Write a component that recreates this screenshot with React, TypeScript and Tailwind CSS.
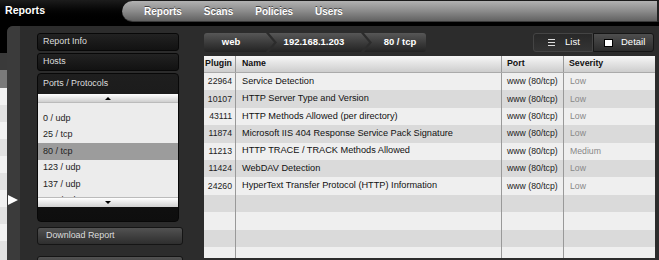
const ports = ["0 / tcp", "0 / udp", "25 / tcp", "80 / tcp", "123 / udp", "137 / udp", "138 / udp"];

const rows = [
  ["22964", "Service Detection", "www (80/tcp)", "Low"],
  ["10107", "HTTP Server Type and Version", "www (80/tcp)", "Low"],
  ["43111", "HTTP Methods Allowed (per directory)", "www (80/tcp)", "Low"],
  ["11874", "Microsoft IIS 404 Response Service Pack Signature", "www (80/tcp)", "Low"],
  ["11213", "HTTP TRACE / TRACK Methods Allowed", "www (80/tcp)", "Medium"],
  ["11424", "WebDAV Detection", "www (80/tcp)", "Low"],
  ["24260", "HyperText Transfer Protocol (HTTP) Information", "www (80/tcp)", "Low"],
  ["", "", "", ""],
  ["", "", "", ""],
  ["", "", "", ""],
  ["", "", "", ""],
];

function SideItem({ label }: { label: string }) {
  return (
    <div className="flex h-[18px] items-center rounded-[3px] border border-[#080808] bg-gradient-to-b from-[#222] to-[#121212] pl-[5px] text-[8.9px] text-[#ddd]">
      {label}
    </div>
  );
}

function GrayButton({ label }: { label: string }) {
  return (
    <div className="flex h-[18px] w-[146px] shrink-0 items-center rounded-[3px] border border-[#151515] bg-gradient-to-b from-[#525252] to-[#2e2e2e] pl-[8px] text-[8.9px] text-[#ddd]">
      {label}
    </div>
  );
}

export default function App() {
  return (
    <div className="flex h-[260px] w-[659px] flex-col overflow-hidden bg-black font-['Liberation_Sans',Arial,sans-serif]">
      {/* top bar */}
      <header className="flex h-[22px] shrink-0 bg-gradient-to-b from-[#1c1c1c] to-black">
        <div className="flex w-[122px] items-center pl-[5px] text-[10.6px] font-bold text-white">Reports</div>
        <nav className="mt-[1px] flex h-[21px] flex-1 items-center gap-[22px] rounded-l-[11px] border-b border-r-2 border-b-[#3a3a3a] border-r-[#222] bg-gradient-to-b from-[#b2b2b2] via-[#8c8c8c] to-[#626262] pl-[22px] text-[10px] font-bold text-white [text-shadow:0_-1px_0_#444]">
          <span>Reports</span>
          <span>Scans</span>
          <span>Policies</span>
          <span>Users</span>
        </nav>
      </header>

      <div className="mt-[4px] flex flex-1">
        {/* page behind the drawer */}
        <div className="flex w-[7px] shrink-0 flex-col">
          <div className="h-[27px] bg-black" />
          <div className="h-[17px] bg-[#3a3a3a]" />
          <div className="h-[18px] bg-[#7a7a7a]" />
          <div className="h-[17px] bg-[#f2f2f2]" />
          <div className="h-[17px] bg-[#e2e2e2]" />
          <div className="h-[17px] bg-[#f2f2f2]" />
          <div className="h-[17px] bg-[#e2e2e2]" />
          <div className="h-[17px] bg-[#f2f2f2]" />
          <div className="h-[17px] bg-[#e2e2e2]" />
          <div className="h-[17px] bg-[#f2f2f2]" />
          <div className="h-[17px] bg-[#e2e2e2]" />
          <div className="h-[17px] bg-[#f2f2f2]" />
          <div className="flex-1 bg-[#e2e2e2]" />
        </div>

        {/* drawer */}
        <div className="flex flex-1 overflow-hidden rounded-tl-[6px] bg-[#2c2c2c]">
          <div className="w-[13px] shrink-0 bg-[#3b3b3b] pl-[1px] pt-[169px]">
            <div className="h-0 w-0 border-y-[5.5px] border-l-[10px] border-y-transparent border-l-white" />
          </div>

          {/* sidebar */}
          <div className="ml-[17px] flex w-[146px] shrink-0 flex-col pt-[7px]">
            <div className="flex w-[142px] flex-col gap-[2px]">
              <SideItem label="Report Info" />
              <SideItem label="Hosts" />
              <div className="flex h-[149px] flex-col overflow-hidden rounded-[4px] border border-[#080808] bg-gradient-to-b from-[#1e1e1e] to-[#0e0e0e]">
                <div className="flex h-[20px] shrink-0 items-center pl-[5px] text-[8.9px] text-[#ddd]">Ports / Protocols</div>
                <div className="flex h-[9px] shrink-0 items-center justify-center border-b border-[#bbb] bg-gradient-to-b from-white to-[#cfcfcf]">
                  <div className="h-0 w-0 border-x-[3px] border-b-[3px] border-x-transparent border-b-black" />
                </div>
                <div className="h-[94px] shrink-0 overflow-hidden bg-[#ececec]">
                  <div className="-mt-[19px]">
                    {ports.map((p) => (
                      <div
                        key={p}
                        className={`flex items-center pl-[5px] text-[9px] text-[#222] ${p === "0 / tcp" ? "h-[26px]" : "h-[16.5px]"} ${p === "80 / tcp" ? "bg-[#9c9c9c]" : ""}`}
                      >
                        {p}
                      </div>
                    ))}
                  </div>
                </div>
                <div className="flex h-[10px] shrink-0 items-center justify-center border-t border-[#bbb] bg-gradient-to-b from-white to-[#d0d0d0]">
                  <div className="h-0 w-0 border-x-[3px] border-t-[3px] border-x-transparent border-t-black" />
                </div>
              </div>
            </div>
            <div className="mt-[5px]">
              <GrayButton label="Download Report" />
            </div>
            <div className="mt-[11px]">
              <GrayButton label="" />
            </div>
          </div>

          {/* main */}
          <div className="ml-[21px] flex flex-1 flex-col pr-[4px] pt-[7px]">
            <div className="flex h-[19px] items-stretch justify-between">
              <div className="flex text-[9.5px] font-bold text-white">
                <div className="flex w-[70px] items-center justify-center rounded-l-[3px] bg-gradient-to-b from-[#575757] to-[#232323] pr-[16px] [clip-path:polygon(0_0,62px_0,70px_50%,62px_100%,0_100%)]">
                  web
                </div>
                <div className="-ml-[5px] flex w-[100px] items-center justify-center bg-gradient-to-b from-[#575757] to-[#232323] pr-[10px] [clip-path:polygon(0_0,92px_0,100px_50%,92px_100%,0_100%,8px_50%)]">
                  192.168.1.203
                </div>
                <div className="-ml-[5px] flex w-[62px] items-center justify-center rounded-r-[3px] bg-gradient-to-b from-[#575757] to-[#232323] pl-[10px] [clip-path:polygon(0_0,100%_0,100%_100%,0_100%,8px_50%)]">
                  80 / tcp
                </div>
              </div>
              <div className="mr-[1px] flex text-[9.5px] text-white">
                <div className="flex w-[60px] items-center rounded-l-[3px] border border-[#444] bg-gradient-to-b from-[#282828] to-[#343434] pl-[14px]">
                  <div className="flex w-[7px] flex-col gap-[1.5px]">
                    <div className="h-[1.5px] bg-[#ddd]" />
                    <div className="h-[1.5px] bg-[#ddd]" />
                    <div className="h-[1.5px] bg-[#ddd]" />
                  </div>
                  <span className="ml-[10px]">List</span>
                </div>
                <div className="flex w-[61px] items-center rounded-r-[3px] border border-[#161616] bg-gradient-to-b from-[#4e4e4e] to-[#2c2c2c] pl-[10px]">
                  <div className="h-[8px] w-[9px] border border-black bg-white" />
                  <span className="ml-[8px]">Detail</span>
                </div>
              </div>
            </div>

            <div className="mt-[4px] h-[202px] overflow-hidden bg-[#efefef]">
              <div className="grid h-[17px] grid-cols-[32px_265px_62px_92px] border-b border-[#aaa] bg-gradient-to-b from-[#f7f7f7] to-[#cdcdcd] text-[8.8px] font-bold text-[#111]">
                <div className="flex items-center justify-end border-r border-[#999] pr-[3px]">Plugin</div>
                <div className="flex items-center pl-[6px]">Name</div>
                <div className="flex items-center border-l border-[#999] pl-[5px]">Port</div>
                <div className="flex items-center border-l border-[#999] pl-[5px]">Severity</div>
              </div>
              {rows.map((r, i) => (
                <div
                  key={i}
                  className={`grid h-[17.4px] grid-cols-[32px_265px_62px_92px] text-[8.7px] ${i % 2 === 0 ? "bg-[#efefef]" : "bg-[#dadada]"}`}
                >
                  <div className="flex items-center justify-end border-r border-[#999] pr-[3px] text-[#222]">{r[0]}</div>
                  <div className="flex items-center overflow-hidden whitespace-nowrap pl-[6px] text-[9.2px] text-[#111]">{r[1]}</div>
                  <div className="flex items-center border-l border-[#999] pl-[5px] text-[#222]">{r[2]}</div>
                  <div className="flex items-center border-l border-[#999] pl-[6px] text-[#888]">{r[3]}</div>
                </div>
              ))}
            </div>
          </div>
        </div>
      </div>
    </div>
  );
}
